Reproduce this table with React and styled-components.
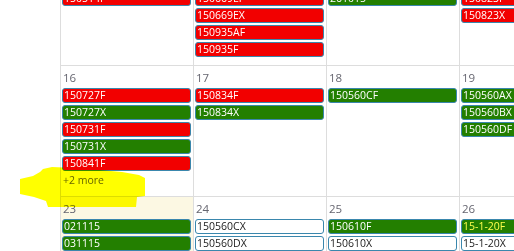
import React from 'react';
import styled, { createGlobalStyle } from 'styled-components';

const GlobalStyle = createGlobalStyle`
	html, body {
		margin: 0;
		padding: 0;
		background: #ffffff;
		overflow: hidden;
	}
	body {
		font-family: "Open Sans", "Noto Sans", sans-serif;
	}
`;

const COLORS = {
	red: { bg: '#f20000', fg: '#ffffff' },
	green: { bg: '#237f00', fg: '#ffffff' },
	greenYellow: { bg: '#237f00', fg: '#ffff4d' },
	white: { bg: '#ffffff', fg: '#1a1a1a' }
};

const weeks = [
	[
		{ day: 9, events: [['150509F', 'red'], ['150509X', 'green'], ['150514F', 'red']] },
		{
			day: 10,
			events: [
				['150612F', 'red'],
				['150612X', 'red'],
				['150669EF', 'red'],
				['150669EX', 'red'],
				['150935AF', 'red'],
				['150935F', 'red']
			]
		},
		{ day: 11, events: [['261013', 'green'], ['261014', 'green'], ['261015', 'green']] },
		{ day: 12, events: [['150822F', 'red'], ['150822X', 'red'], ['150823F', 'red'], ['150823X', 'red']] }
	],
	[
		{
			day: 16,
			events: [
				['150727F', 'red'],
				['150727X', 'green'],
				['150731F', 'red'],
				['150731X', 'green'],
				['150841F', 'red']
			],
			more: 2
		},
		{ day: 17, events: [['150834F', 'red'], ['150834X', 'green']] },
		{ day: 18, events: [['150560CF', 'green']] },
		{ day: 19, events: [['150560AX', 'green'], ['150560BX', 'green'], ['150560DF', 'green']] }
	],
	[
		{ day: 23, today: true, events: [['021115', 'green'], ['031115', 'green']] },
		{ day: 24, events: [['150560CX', 'white'], ['150560DX', 'white']] },
		{ day: 25, events: [['150610F', 'green'], ['150610X', 'white']] },
		{ day: 26, events: [['15-1-20F', 'greenYellow'], ['15-1-20X', 'white']] }
	]
];

const App = () => {
	return (
		<Viewport>
			<GlobalStyle />
			<Calendar>
				{weeks.map((week, i) => (
					<Week key={i}>
						{week.map((cell) => (
							<Day key={cell.day} $today={cell.today}>
								<DayNumber>{cell.day}</DayNumber>
								{cell.events.map(([title, kind]) => (
									<Event key={title} $bg={COLORS[kind].bg} $fg={COLORS[kind].fg}>
										{title}
									</Event>
								))}
								{cell.more && <MoreLink>+{cell.more} more</MoreLink>}
							</Day>
						))}
					</Week>
				))}
			</Calendar>
			<Highlight viewBox="0 0 514 251" width="514" height="251">
				<defs>
					<filter id="soft" x="-5%" y="-5%" width="110%" height="110%">
						<feGaussianBlur stdDeviation="0.6" />
					</filter>
				</defs>
				<path
					filter="url(#soft)"
					fill="#ffff00"
					d="M43 169 L52 167 L75 168 L100 170 L122 172 L139 175 L145 178 L145 196 L137 197 L136 207 L48 207 L46 201 L34 197 L20 194 L20 179 L33 176 L40 172 Z"
				/>
			</Highlight>
		</Viewport>
	);
};

const Viewport = styled.div`
	position: relative;
	width: 514px;
	height: 251px;
	overflow: hidden;
	background: #ffffff;
`;

/* scrolled: the first week's top edge sits above the window */
const Calendar = styled.div`
	margin-top: -66px;
	padding-left: 60px;
`;

const Week = styled.div`
	display: grid;
	grid-template-columns: repeat(4, 133px);
	height: 131px;
	box-sizing: border-box;
	border-top: 1px solid #dddddd;
`;

const Day = styled.div`
	border-left: 1px solid #dddddd;
	background: ${(p) => (p.$today ? '#fcf8e3' : 'transparent')};
	display: flex;
	flex-direction: column;
	min-width: 0;
`;

const DayNumber = styled.div`
	height: 20px;
	box-sizing: border-box;
	padding: 3px 2px 0;
	font-size: 11.5px;
	line-height: 17px;
	color: #666670;
`;

const Event = styled.div`
	margin: 2px 2px 0 1px;
	height: 15px;
	box-sizing: border-box;
	border: 1px solid #3a87ad;
	border-radius: 3px;
	padding: 0 1px;
	background: ${(p) => p.$bg};
	color: ${(p) => p.$fg};
	font-size: 10.5px;
	line-height: 13px;
	white-space: nowrap;
	overflow: hidden;
`;

const MoreLink = styled.div`
	margin-top: 2px;
	padding: 0 2px;
	font-size: 10.5px;
	line-height: 15px;
	color: #666666;
`;

const Highlight = styled.svg`
	position: absolute;
	left: 0;
	top: 0;
	pointer-events: none;
	mix-blend-mode: multiply;
`;

export default App;
